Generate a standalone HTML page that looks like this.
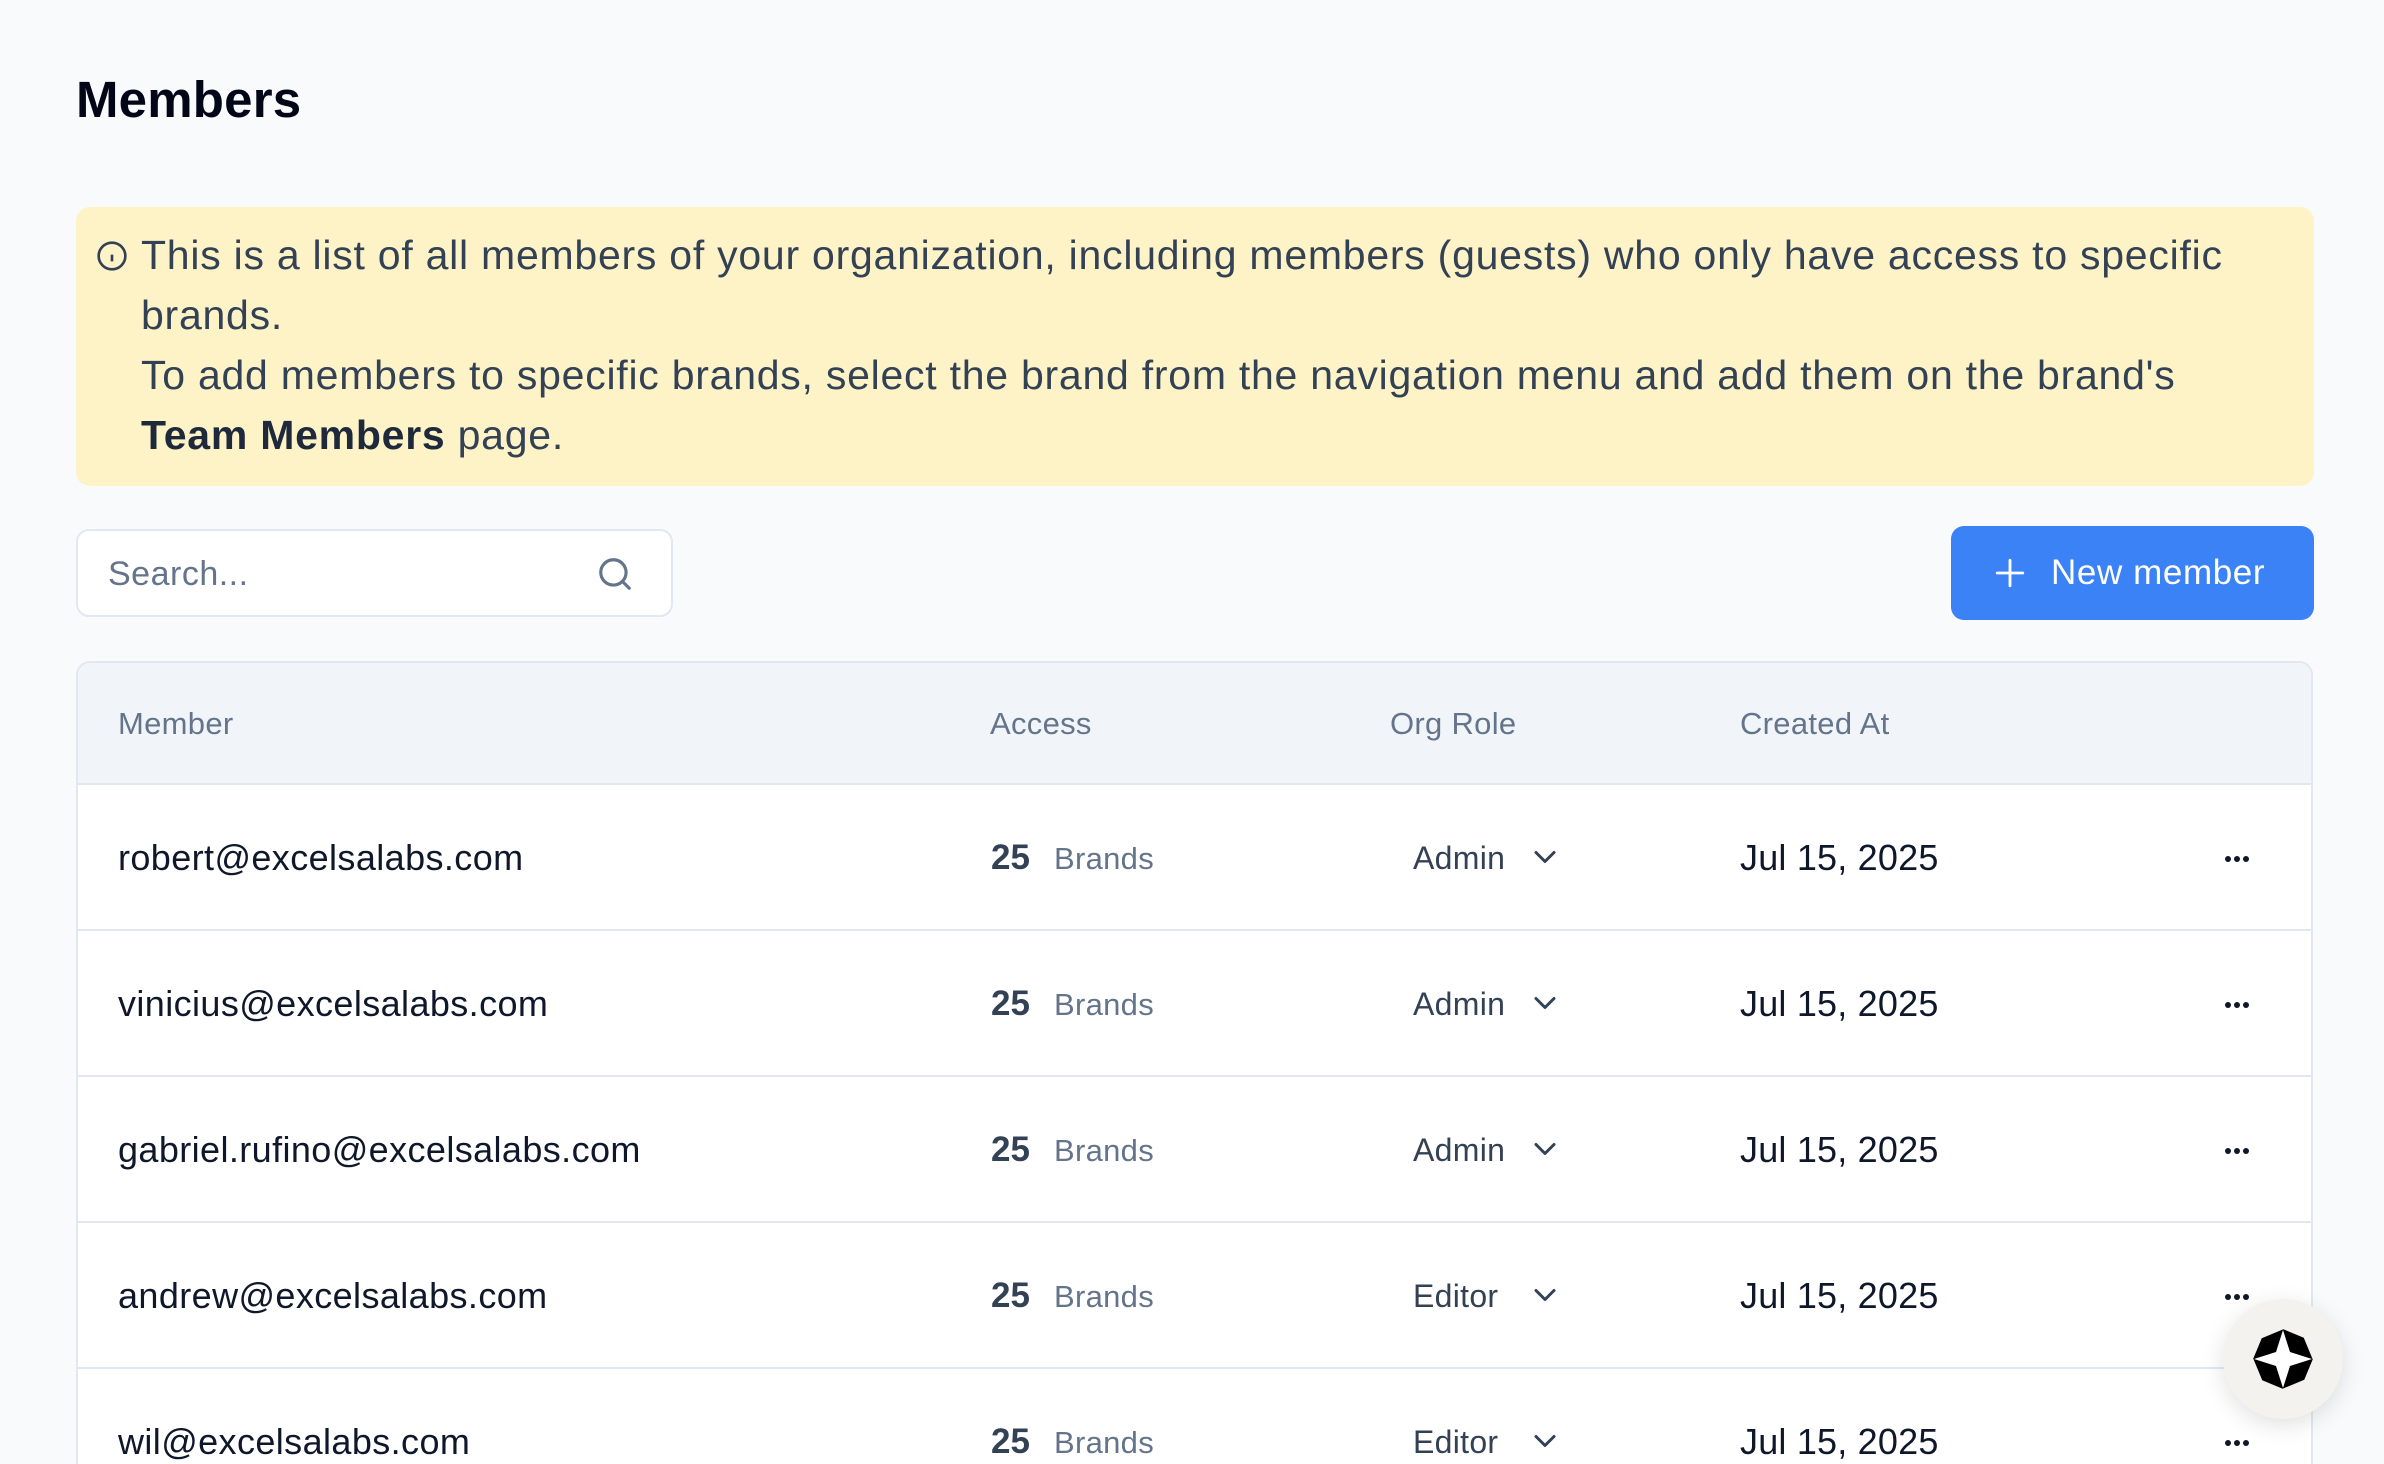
<!DOCTYPE html>
<html style="width:2384px;height:1464px;overflow:hidden"><head><meta charset="utf-8"><style>
*{box-sizing:border-box;margin:0;padding:0}
body{width:2384px;height:1464px;overflow:hidden;background:#f8fafc;font-family:"Liberation Sans",sans-serif;position:relative;color:#0f172a}
.abs{position:absolute}
h1{position:absolute;left:76px;top:70px;font-size:51px;font-weight:700;color:#020617;letter-spacing:0.2px}
.banner{left:76px;top:207px;width:2238px;height:279px;background:#fef3c7;border-radius:14px}
.btxt{position:absolute;left:141px;top:225px;font-size:41px;line-height:60px;color:#334155;width:2200px;white-space:nowrap;letter-spacing:0.75px}
.search{left:76px;top:529px;width:597px;height:88px;background:#fff;border:2px solid #e2e8f0;border-radius:13px}
.search span{position:absolute;left:30px;top:24px;font-size:34px;color:#64748b;letter-spacing:0.5px}
.btn{left:1951px;top:526px;width:363px;height:94px;background:#3b82f6;border-radius:13px;color:#fff;font-size:35px}
.table{left:76px;top:661px;width:2237px;height:820px;background:#fff;border:2px solid #e2e8f0;border-radius:14px;overflow:hidden}
.head{position:absolute;left:0;top:0;width:100%;height:122px;background:#f1f5f9;border-bottom:2px solid #e2e8f0}
.h{position:absolute;top:43px;font-size:31px;color:#64748b;letter-spacing:0.3px}
.row{position:absolute;left:0;width:100%;height:146px;border-bottom:2px solid #e2e8f0}
.row .c{position:absolute;top:52px;font-size:36px;color:#0f172a;letter-spacing:0.4px}
.row .d2{letter-spacing:0.2px}
.row .n{position:absolute;left:913px;top:53px;font-size:35px;font-weight:700;color:#334155}
.row .b{position:absolute;left:976px;top:56px;font-size:31px;color:#64748b;letter-spacing:0.3px}
.row .r{position:absolute;left:1335px;top:55px;font-size:32px;color:#334155;letter-spacing:0.3px}
.row svg.ch{position:absolute;left:1449px;top:54px}
.row .d{position:absolute;left:2147px;top:64px}
.dot{display:inline-block;width:6px;height:6px;border-radius:50%;background:#0f172a;margin-right:3px}
</style></head><body>
<h1>Members</h1>
<div class="abs banner"></div>
<svg class="abs" style="left:96px;top:240px" width="32" height="32" viewBox="0 0 24 24" fill="none" stroke="#334155" stroke-width="2"><circle cx="12" cy="12" r="10"/><path d="M12 16v-5M12 8h.01"/></svg>
<div class="btxt">This is a list of all members of your organization, including members (guests) who only have access to specific<br>brands.<br>To add members to specific brands, select the brand from the navigation menu and add them on the brand's<br><b style="color:#1e293b">Team Members</b> page.</div>
<div class="abs search"><span>Search...</span>
<svg style="position:absolute;left:518px;top:24px" width="38" height="38" viewBox="0 0 24 24" fill="none" stroke="#64748b" stroke-width="2" stroke-linecap="round"><circle cx="11" cy="11" r="8"/><path d="M21 21l-4.3-4.3"/></svg></div>
<div class="abs btn">
<svg style="position:absolute;left:42px;top:30px" width="34" height="34" viewBox="0 0 24 24" fill="none" stroke="#fff" stroke-width="2" stroke-linecap="round"><path d="M12 3v18M3 12h18"/></svg>
<span style="position:absolute;left:100px;top:27px;letter-spacing:0.6px">New member</span></div>
<div class="abs table">
<div class="head"><span class="h" style="left:40px">Member</span><span class="h" style="left:912px">Access</span><span class="h" style="left:1312px">Org Role</span><span class="h" style="left:1662px">Created At</span></div>
<div class="row" style="top:122px"><span class="c" style="left:40px">robert@excelsalabs.com</span><span class="n">25</span><span class="b">Brands</span><span class="r">Admin</span><svg class="ch" width="36" height="36" viewBox="0 0 24 24" fill="none" stroke="#334155" stroke-width="2" stroke-linecap="round" stroke-linejoin="round"><path d="M6 9l6 6 6-6"/></svg><span class="c d2" style="left:1662px">Jul 15, 2025</span><span class="d"><i class="dot"></i><i class="dot"></i><i class="dot"></i></span></div>
<div class="row" style="top:268px"><span class="c" style="left:40px">vinicius@excelsalabs.com</span><span class="n">25</span><span class="b">Brands</span><span class="r">Admin</span><svg class="ch" width="36" height="36" viewBox="0 0 24 24" fill="none" stroke="#334155" stroke-width="2" stroke-linecap="round" stroke-linejoin="round"><path d="M6 9l6 6 6-6"/></svg><span class="c d2" style="left:1662px">Jul 15, 2025</span><span class="d"><i class="dot"></i><i class="dot"></i><i class="dot"></i></span></div>
<div class="row" style="top:414px"><span class="c" style="left:40px">gabriel.rufino@excelsalabs.com</span><span class="n">25</span><span class="b">Brands</span><span class="r">Admin</span><svg class="ch" width="36" height="36" viewBox="0 0 24 24" fill="none" stroke="#334155" stroke-width="2" stroke-linecap="round" stroke-linejoin="round"><path d="M6 9l6 6 6-6"/></svg><span class="c d2" style="left:1662px">Jul 15, 2025</span><span class="d"><i class="dot"></i><i class="dot"></i><i class="dot"></i></span></div>
<div class="row" style="top:560px"><span class="c" style="left:40px">andrew@excelsalabs.com</span><span class="n">25</span><span class="b">Brands</span><span class="r">Editor</span><svg class="ch" width="36" height="36" viewBox="0 0 24 24" fill="none" stroke="#334155" stroke-width="2" stroke-linecap="round" stroke-linejoin="round"><path d="M6 9l6 6 6-6"/></svg><span class="c d2" style="left:1662px">Jul 15, 2025</span><span class="d"><i class="dot"></i><i class="dot"></i><i class="dot"></i></span></div>
<div class="row" style="top:706px"><span class="c" style="left:40px">wil@excelsalabs.com</span><span class="n">25</span><span class="b">Brands</span><span class="r">Editor</span><svg class="ch" width="36" height="36" viewBox="0 0 24 24" fill="none" stroke="#334155" stroke-width="2" stroke-linecap="round" stroke-linejoin="round"><path d="M6 9l6 6 6-6"/></svg><span class="c d2" style="left:1662px">Jul 15, 2025</span><span class="d"><i class="dot"></i><i class="dot"></i><i class="dot"></i></span></div>
</div>
<div class="abs" style="left:2223px;top:1299px;width:120px;height:120px;border-radius:50%;background:#f3f2ef;box-shadow:0 6px 24px rgba(0,0,0,0.12)">
<svg style="position:absolute;left:30px;top:30px" width="60" height="60" viewBox="0 0 60 60"><polygon points="18,0 42,0 60,18 60,42 42,60 18,60 0,42 0,18" fill="#000" transform="rotate(22.5 30 30) scale(0.92) translate(2.6 2.6)"/><path d="M30 1 L37 23 L59 30 L37 37 L30 59 L23 37 L1 30 L23 23 Z" fill="#fff"/></svg></div>
</body></html>
